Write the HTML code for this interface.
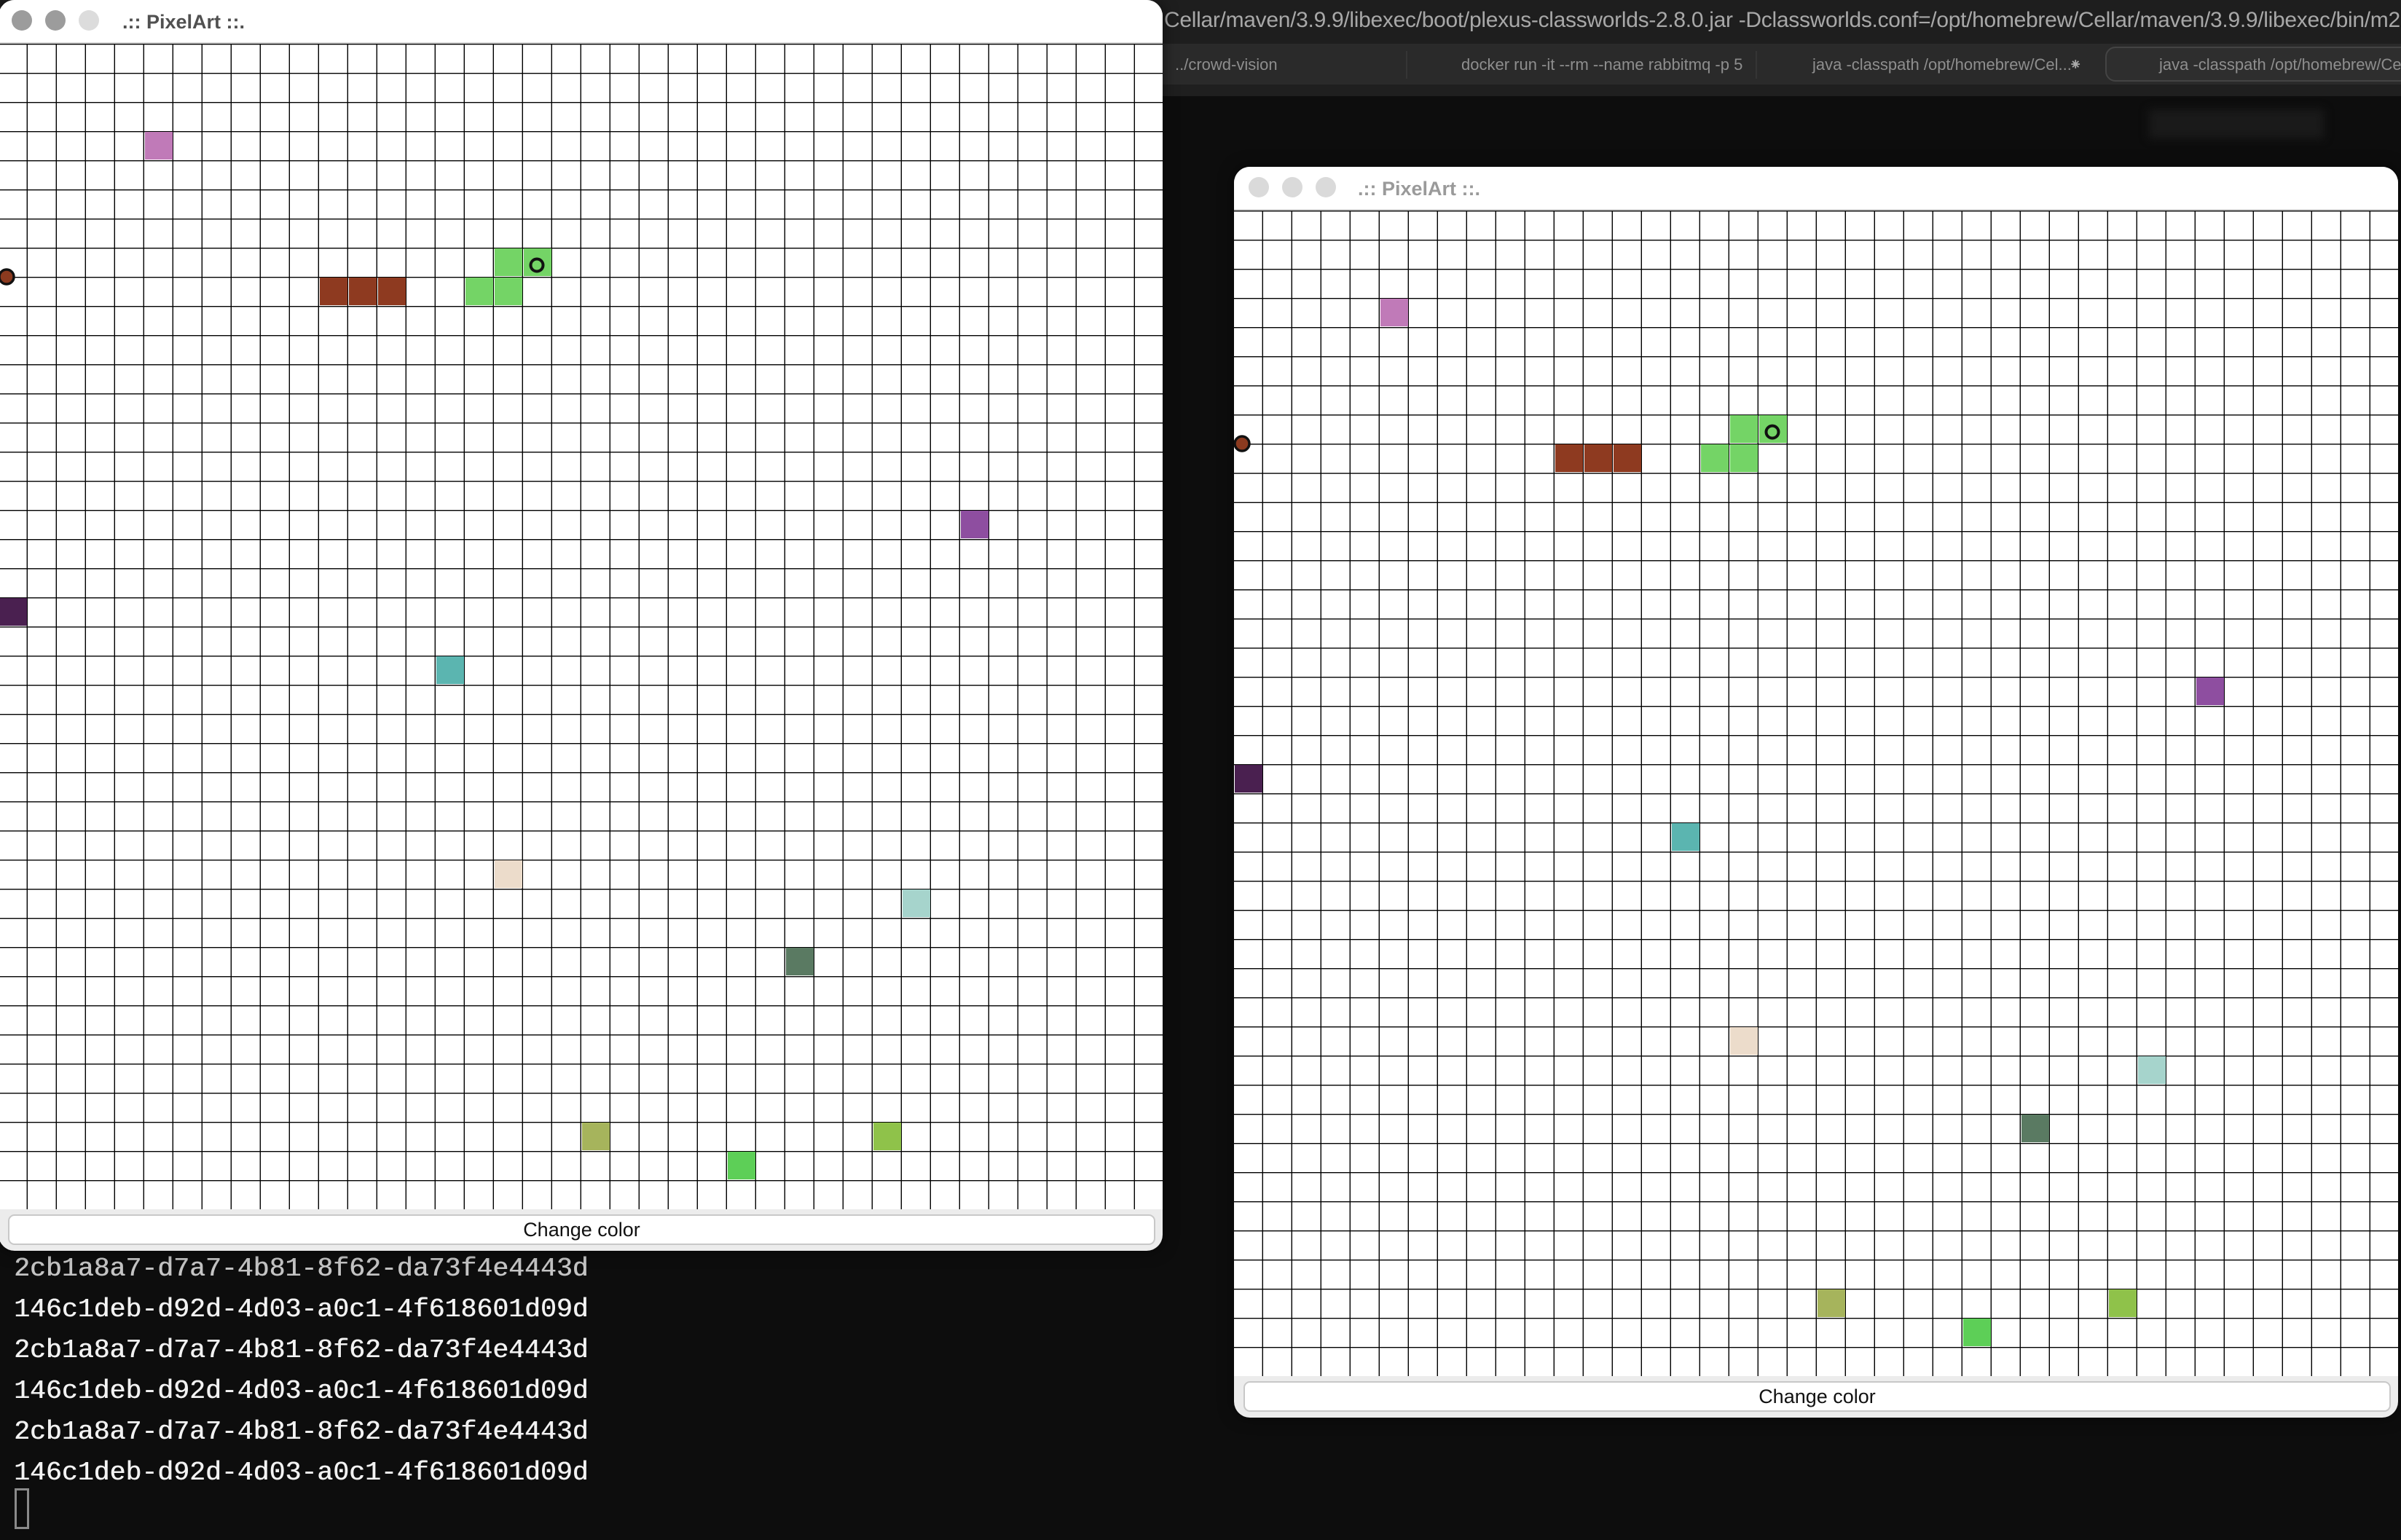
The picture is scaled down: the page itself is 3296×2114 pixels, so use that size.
<!DOCTYPE html>
<html><head><meta charset="utf-8"><style>
*{margin:0;padding:0;box-sizing:border-box}
body{width:3296px;height:2114px;background:#0d0d0d;position:relative;overflow:hidden;font-family:"Liberation Sans",sans-serif}
.tb{position:absolute;left:0;top:0;width:3296px;height:60px;background:#1e1e1e}
.ttl{position:absolute;left:1598px;top:11px;font-size:30px;color:#a8a8a8;white-space:nowrap;letter-spacing:-0.3px}
.tabs{position:absolute;left:0;top:60px;width:3296px;height:56px;background:#2a2a2a}
.tabs2{position:absolute;left:0;top:116px;width:3296px;height:16px;background:#1f1f1f}
.tab{position:absolute;top:76px;font-size:22px;color:#8e8e8e;white-space:nowrap}
.sep{position:absolute;top:70px;width:2px;height:38px;background:#353535}
.act{position:absolute;left:2890px;top:64px;width:420px;height:48px;border:2px solid #444;border-radius:14px;background:#2e2e2e}
.win{position:absolute;width:1598px;height:1717px;border-radius:22px;overflow:hidden;background:#ececec;box-shadow:0 0 20px rgba(0,0,0,.5)}
.wt{position:absolute;left:0;top:0;width:100%;height:60px;background:#fff;border-bottom:2px solid #d6d6d6}
.l{position:absolute;top:14px;width:28px;height:28px;border-radius:50%}
.wt span{position:absolute;left:170px;top:15px;font-size:27px;font-weight:bold}
.grid{position:absolute;left:0;top:60px}
.btn{position:absolute;left:13px;top:1667px;width:1575px;height:42px;background:#fff;border:2px solid #c8c8c8;border-radius:9px;text-align:center;font-size:27px;line-height:38px;color:#111}
.term{position:absolute;left:19px;top:1714px;font-family:"Liberation Mono",monospace;font-size:36.5px;line-height:56px;color:#f2f2f2;white-space:pre;text-shadow:0.6px 0 0 currentColor}
</style></head><body>
<div class="tb"></div>
<div class="ttl">Cellar/maven/3.9.9/libexec/boot/plexus-classworlds-2.8.0.jar -Dclassworlds.conf=/opt/homebrew/Cellar/maven/3.9.9/libexec/bin/m2.conf</div>
<div class="tabs"></div><div class="tabs2"></div>
<div class="tab" style="left:1613px">../crowd-vision</div>
<div class="sep" style="left:1930px"></div>
<div class="tab" style="left:2006px">docker run -it --rm --name rabbitmq -p 5</div>
<div class="sep" style="left:2410px"></div>
<div class="tab" style="left:2488px">java -classpath /opt/homebrew/Cel...</div>
<div class="tab" style="left:2840px;color:#aaa">⁕</div>
<div class="act"></div>
<div class="tab" style="left:2964px">java -classpath /opt/homebrew/Ce</div>
<div style="position:absolute;left:2950px;top:150px;width:240px;height:40px;background:#1a1a1a;filter:blur(6px)"></div>

<div class="term"><span style="color:#c4c4c4">2cb1a8a7-d7a7-4b81-8f62-da73f4e4443d</span>
146c1deb-d92d-4d03-a0c1-4f618601d09d
2cb1a8a7-d7a7-4b81-8f62-da73f4e4443d
146c1deb-d92d-4d03-a0c1-4f618601d09d
2cb1a8a7-d7a7-4b81-8f62-da73f4e4443d
146c1deb-d92d-4d03-a0c1-4f618601d09d</div>
<div style="position:absolute;left:20px;top:2043px;width:20px;height:56px;border:3px solid #8a8a8a"></div>

<div class="win" style="left:-2px;top:0">
 <div class="wt"><div class="l" style="left:18px;background:#9c9c9c"></div><div class="l" style="left:64px;background:#9c9c9c"></div><div class="l" style="left:110px;background:#dcdcdc"></div><span style="color:#505050">.:: PixelArt ::.</span></div>
 <svg class="grid" width="1598" height="1600"><use href="#g"/></svg>
 <div class="btn">Change color</div>
</div>

<div class="win" style="left:1694px;top:229px">
 <div class="wt"><div class="l" style="left:20px;background:#dadada"></div><div class="l" style="left:66px;background:#dadada"></div><div class="l" style="left:112px;background:#dadada"></div><span style="color:#9a9a9a">.:: PixelArt ::.</span></div>
 <svg class="grid" width="1598" height="1600"><use href="#g"/></svg>
 <div class="btn">Change color</div>
</div>

<svg width="0" height="0" style="position:absolute">
<defs>
<pattern id="p" patternUnits="userSpaceOnUse" x="0" y="0" width="40" height="40"><path d="M40 0V40M0 0H40" stroke="#000" stroke-width="2.8" fill="none"/></pattern>
<g id="g">
<rect width="1600" height="1600" fill="#fff"/>
<rect x="0" y="0" width="1600" height="1602" fill="url(#p)"/>
<g>
<rect x="201" y="121" width="38" height="38" fill="#c07ab8"/>
<rect x="681" y="281" width="38" height="38" fill="#74d466"/>
<rect x="721" y="281" width="38" height="38" fill="#74d466"/>
<rect x="641" y="321" width="38" height="38" fill="#74d466"/>
<rect x="681" y="321" width="38" height="38" fill="#74d466"/>
<rect x="441" y="321" width="38" height="38" fill="#8e3a20"/>
<rect x="481" y="321" width="38" height="38" fill="#8e3a20"/>
<rect x="521" y="321" width="38" height="38" fill="#8e3a20"/>
<rect x="1321" y="641" width="38" height="38" fill="#8e4ea0"/>
<rect x="1" y="761" width="38" height="38" fill="#4a2050"/>
<rect x="601" y="841" width="38" height="38" fill="#5bb5b0"/>
<rect x="681" y="1121" width="38" height="38" fill="#ecdccb"/>
<rect x="1241" y="1161" width="38" height="38" fill="#a6d4cc"/>
<rect x="1081" y="1241" width="38" height="38" fill="#5a7a62"/>
<rect x="801" y="1481" width="38" height="38" fill="#a6b45c"/>
<rect x="1001" y="1521" width="38" height="38" fill="#5dcf57"/>
<rect x="1201" y="1481" width="38" height="38" fill="#8fc24a"/>
</g>
<circle cx="739" cy="304" r="8.5" fill="none" stroke="#111" stroke-width="4"/>
<circle cx="11" cy="320" r="10" fill="#8b3a1f" stroke="#111" stroke-width="3.5"/>
</g>
</defs></svg>
</body></html>
